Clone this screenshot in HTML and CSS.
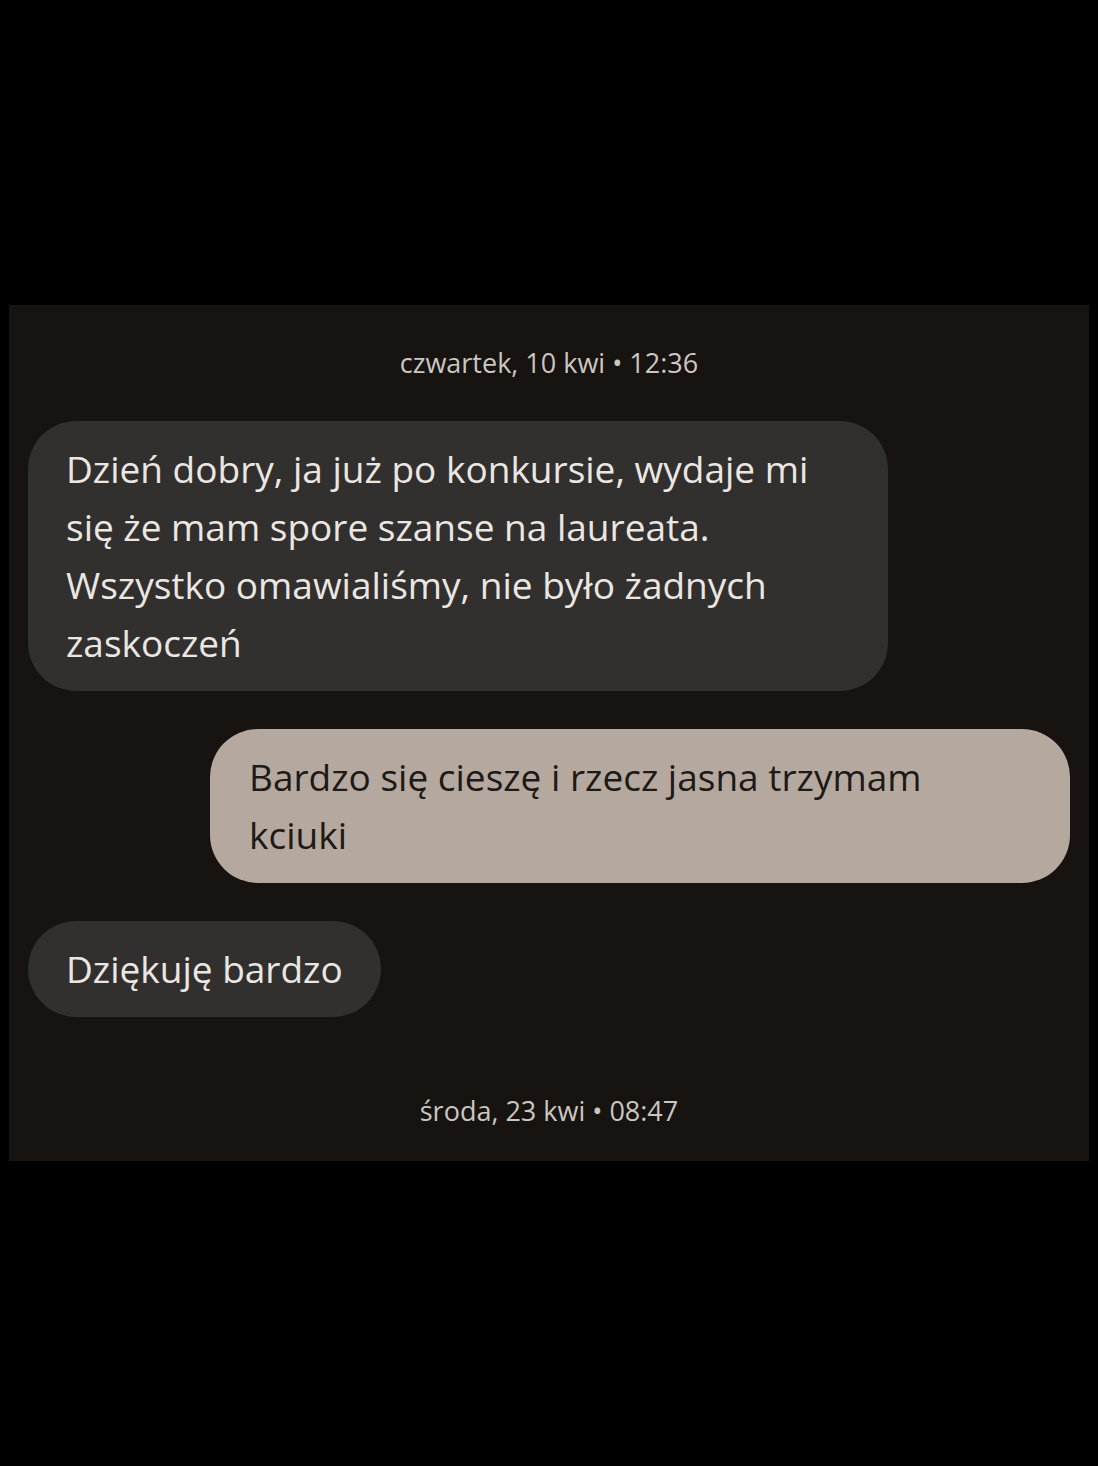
FILE: index.html
```html
<!DOCTYPE html>
<html lang="pl">
<head>
  <meta charset="UTF-8">
  <meta name="viewport" content="width=device-width, initial-scale=1.0">
  <title>Wiadomości</title>
  <link rel="stylesheet" href="styles.css">
</head>
<body>
  <div class="chat">
    <div class="date">czwartek, 10 kwi • 12:36</div>
    <div class="messages">
      <div class="bubble incoming">Dzień dobry, ja już po konkursie, wydaje mi się że mam spore szanse na laureata. Wszystko omawialiśmy, nie było żadnych zaskoczeń</div>
      <div class="bubble outgoing">Bardzo się cieszę i rzecz jasna trzymam kciuki</div>
      <div class="bubble incoming">Dziękuję bardzo</div>
    </div>
    <div class="date last">środa, 23 kwi • 08:47</div>
  </div>
</body>
</html>
```

FILE: styles.css
```css
body {
  margin: 0;
  background-color: #000000;
  font-family: 'Open Sans', 'Noto Sans', sans-serif;
  height: 1466px;
  display: flex;
  flex-direction: column;
  justify-content: center;
}
.chat {
  margin: 0 9px;
  background-color: #161310;
  padding: 40px 19px 32px;
  display: flex;
  flex-direction: column;
  height: 856px;
  box-sizing: border-box;
}
.date {
  text-align: center;
  color: #cbc6c1;
  font-size: 27px;
  line-height: 36px;
}
.date.last {
  margin-top: 76px;
}
.messages {
  margin-top: 40px;
  display: flex;
  flex-direction: column;
  gap: 38px;
}
.bubble {
  max-width: 860px;
  box-sizing: border-box;
  padding: 19px 38px;
  border-radius: 48px;
  font-size: 37px;
  line-height: 58px;
}
.incoming {
  align-self: flex-start;
  background-color: #31302e;
  color: #ebe6e2;
}
.outgoing {
  align-self: flex-end;
  padding: 19px 50px 19px 39px;
  background-color: #b5a99f;
  color: #1e1a17;
}
```
